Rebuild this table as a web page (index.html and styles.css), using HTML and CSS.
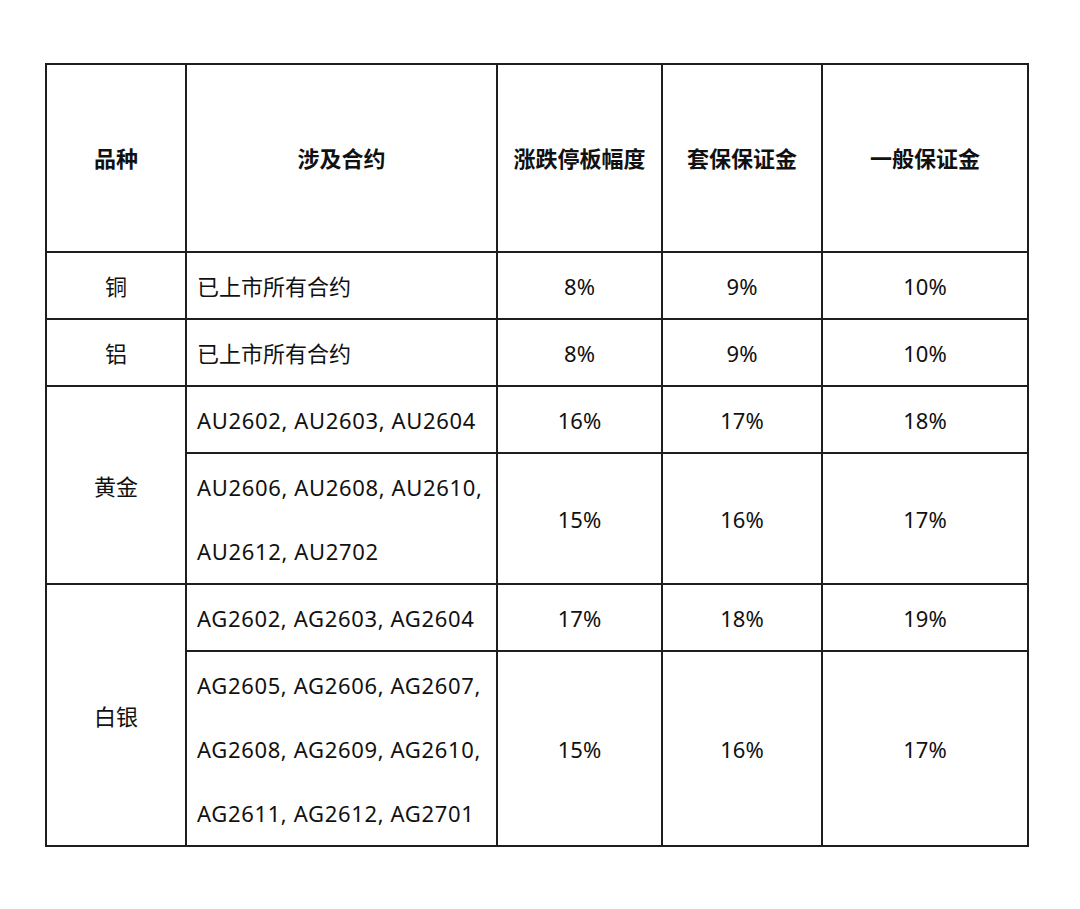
FILE: index.html
```html
<!DOCTYPE html>
<html lang="zh-CN">
<head>
<meta charset="utf-8">
<link rel="stylesheet" href="styles.css">
</head>
<body>
<div class="page">
<table class="margin-table">
  <colgroup>
    <col class="c1"><col class="c2"><col class="c3"><col class="c4"><col class="c5">
  </colgroup>
  <thead>
    <tr class="head">
      <th>品种</th>
      <th>涉及合约</th>
      <th>涨跌停板幅度</th>
      <th>套保保证金</th>
      <th>一般保证金</th>
    </tr>
  </thead>
  <tbody>
    <tr>
      <td class="mid">铜</td>
      <td class="left">已上市所有合约</td>
      <td class="mid">8%</td>
      <td class="mid">9%</td>
      <td class="mid">10%</td>
    </tr>
    <tr>
      <td class="mid">铝</td>
      <td class="left">已上市所有合约</td>
      <td class="mid">8%</td>
      <td class="mid">9%</td>
      <td class="mid">10%</td>
    </tr>
    <tr>
      <td class="mid" rowspan="2">黄金</td>
      <td class="left latin">AU2602, AU2603, AU2604</td>
      <td class="mid">16%</td>
      <td class="mid">17%</td>
      <td class="mid">18%</td>
    </tr>
    <tr>
      <td class="left latin">AU2606, AU2608, AU2610,<br>AU2612, AU2702</td>
      <td class="mid">15%</td>
      <td class="mid">16%</td>
      <td class="mid">17%</td>
    </tr>
    <tr>
      <td class="mid" rowspan="2">白银</td>
      <td class="left latin">AG2602, AG2603, AG2604</td>
      <td class="mid">17%</td>
      <td class="mid">18%</td>
      <td class="mid">19%</td>
    </tr>
    <tr>
      <td class="left latin">AG2605, AG2606, AG2607,<br>AG2608, AG2609, AG2610,<br>AG2611, AG2612, AG2701</td>
      <td class="mid">15%</td>
      <td class="mid">16%</td>
      <td class="mid">17%</td>
    </tr>
  </tbody>
</table>
</div>
</body>
</html>
```
FILE: styles.css
```css
html, body {
  margin: 0;
  padding: 0;
  background: #ffffff;
}
.page {
  padding: 63px 0 0 45px;
}
.margin-table {
  border-collapse: collapse;
  table-layout: fixed;
  width: 982px;
  font-family: "Noto Sans", "Noto Sans CJK SC", sans-serif;
  font-size: 22px;
  color: #111111;
}
.c1 { width: 140px; }
.c2 { width: 311px; }
.c3 { width: 165px; }
.c4 { width: 160px; }
.c5 { width: 206px; }
.margin-table th,
.margin-table td {
  border: 2px solid #1e1e1e;
  padding: 1px 10px 0;
  line-height: 64px;
  vertical-align: middle;
}
.margin-table th {
  height: 186px;
  font-weight: bold;
  text-align: center;
  padding: 0 4px;
  white-space: nowrap;
}
.mid {
  text-align: center;
}
.left {
  text-align: left;
  padding-left: 10px;
  white-space: nowrap;
}
.latin {
  letter-spacing: 0.65px;
}
```
